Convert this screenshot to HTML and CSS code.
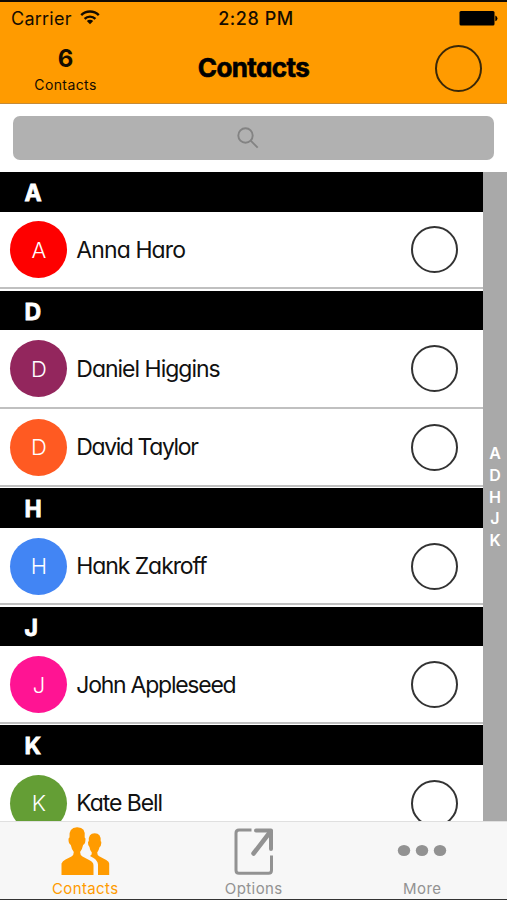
FILE: index.html
```html
<!DOCTYPE html>
<html lang="en">
<head>
<meta charset="utf-8">
<title>Contacts</title>
<link rel="stylesheet" href="styles.css">
</head>
<body>
<div class="app">
  <header class="top">
    <div class="status">
      <div class="carrier"><span>Carrier</span>
        <svg width="20" height="15" viewBox="0 0 20 15" fill="none" stroke="#140c00" stroke-width="2.4"><path d="M1.2 5.2a12.4 12.4 0 0 1 17.6 0M4.6 8.9a7.6 7.6 0 0 1 10.8 0"/><path d="M10 14.2 6.8 11a4.5 4.5 0 0 1 6.400 0z" fill="#140c00" stroke="none"/></svg>
      </div>
      <div class="clock">2:28 PM</div>
      <svg class="battery" width="39" height="15" viewBox="0 0 39 15"><rect x=".5" width="35" height="14.500" rx="1.500"/><path d="M36.300 4.500q2.200 1 2.200 2.900t-2.200 2.900z"/></svg>
    </div>
    <div class="nav">
      <div class="count"><b>6</b><span>Contacts</span></div>
      <h1>Contacts</h1>
      <span class="ring"></span>
    </div>
  </header>
  <div class="search"><div class="field">
    <svg width="22" height="22" viewBox="0 0 22 22" fill="none" stroke="#838383" stroke-width="1.900"><circle cx="8.500" cy="8.500" r="7.200"/><path d="m13.700 13.700 7 7"/></svg>
  </div></div>
  <main class="body">
    <div class="list">
      <h2>A</h2>
      <div class="row last"><span class="avatar red">A</span><span class="name n1">Anna Haro</span><span class="ring"></span></div>
      <h2>D</h2>
      <div class="row"><span class="avatar plum">D</span><span class="name n2">Daniel Higgins</span><span class="ring"></span></div>
      <div class="row last"><span class="avatar orange">D</span><span class="name n3">David Taylor</span><span class="ring"></span></div>
      <h2>H</h2>
      <div class="row last"><span class="avatar blue">H</span><span class="name n4">Hank Zakroff</span><span class="ring"></span></div>
      <h2>J</h2>
      <div class="row last"><span class="avatar pink">J</span><span class="name n5">John Appleseed</span><span class="ring"></span></div>
      <h2>K</h2>
      <div class="row last"><span class="avatar green">K</span><span class="name n6">Kate Bell</span><span class="ring"></span></div>
    </div>
    <nav class="index"><span>A</span><span>D</span><span>H</span><span>J</span><span>K</span></nav>
  </main>
  <footer class="tabs">
    <div class="tab active">
      <svg width="50" height="50" viewBox="0 0 50 50" fill="currentColor"><path d="M1.500 48V36.500q1-2.500 4-4l6-3q2.300-1.200 2.300-4.500-2.300-3-3-7-2.500-1.500-2.300-6 .2-1.500 1-1.600-1-10 7.500-10.200 9-.2 7.700 10.200 1 .3.800 2-.2 4.500-2.400 5.600-.7 4-3 7 0 3.300 2.400 4.500l7 3.800q4 1.800 4 5.200V48z"/><path d="M38 48V37.500q-.4-4-4.500-6.500l-3.500-2q2.300-1.500 1.800-3.500-2-2.500-2.300-5.500-1.600-1-1.500-4.500 0-1.200.8-1.300Q28.200 6.300 34.700 6.300t6 8q.8.200.6 1.700-.2 3.500-1.800 4.300-.7 3.200-2.300 5.200 0 2.700 2 3.800l7 3.600q3 1.500 3 3.600V48z"/></svg>
      <span>Contacts</span>
    </div>
    <div class="tab">
      <svg width="40" height="50" viewBox="0 0 40 50" fill="none" stroke="currentColor" stroke-width="3"><path d="M17.500 3H5Q2 3 2 6v37.300q0 3 3 3h29.500q3 0 3-3V28.500"/><path d="M22 3.500h15V22" stroke-width="4" stroke-linejoin="round" stroke-linecap="round"/><path d="M36.500 4.500 19.500 26.500" stroke-width="4.500" stroke-linecap="round"/></svg>
      <span>Options</span>
    </div>
    <div class="tab">
      <svg width="50" height="50" viewBox="0 0 50 50" fill="currentColor"><ellipse cx="7" cy="23.500" rx="6.200" ry="5.500"/><ellipse cx="25" cy="23.500" rx="6.200" ry="5.500"/><ellipse cx="43" cy="23.500" rx="6.200" ry="5.500"/></svg>
      <span>More</span>
    </div>
  </footer>
</div>
</body>
</html>
```
FILE: styles.css
```css
* { box-sizing: border-box; }
body { margin: 0; font-family: Inter, "Liberation Sans", sans-serif; }
.app { width: 507px; height: 900px; display: flex; flex-direction: column; overflow: hidden; background: #fff; border-bottom: 1px solid #333; }
.top { height: 104px; flex: none; background: #ff9b00; border-top: 2px solid #100a04; border-bottom: 1px solid #c58b38; color: #140c00; }
.status { height: 32px; display: grid; grid-template-columns: 1fr 100px 1fr; align-items: center; padding: 0 9px 0 11px; }
.carrier { display: flex; align-items: center; gap: 8px; font-size: 18px; letter-spacing: .25px; }
.carrier svg { margin-top: -2px; }
.clock { text-align: center; font-size: 18px; font-weight: 500; letter-spacing: .55px; padding-left: 3px; white-space: nowrap; }
.battery { justify-self: end; fill: #000; }
.nav { height: 68px; display: grid; grid-template-columns: 131px 1fr 131px; align-items: center; }
.count { display: flex; flex-direction: column; align-items: center; padding-top: 6px; }
.count b { font-size: 24px; line-height: 28px; font-weight: 700; }
.count span { font-size: 14px; line-height: 24px; letter-spacing: .4px; }
h1, h2, .name { font-feature-settings: "cv11"; }
h1 { margin: 0; text-align: center; font-size: 26px; line-height: 32px; font-weight: 700; letter-spacing: -.6px; color: #000; -webkit-text-stroke: .6px #000; stroke-linejoin: round; }
.ring { width: 47px; height: 47px; flex: none; border: 2px solid #333; border-radius: 50%; }
.nav .ring { justify-self: end; margin-right: 25.500px; border-color: #3a2808; }
.search { height: 68px; flex: none; padding: 12px 13px 0 13px; }
.field { height: 44px; border-radius: 7px; background: #b1b1b1; display: flex; align-items: center; justify-content: center; padding-right: 12px; }
.body { flex: 1; min-height: 0; display: flex; overflow: hidden; }
.list { flex: 1; }
h2 { margin: 0; height: 39.600px; padding-left: 24.500px; background: #000; color: #fff; font-size: 23px; line-height: 42px; font-weight: 700; -webkit-text-stroke: .8px #fff; stroke-linejoin: round; }
.row { height: 79px; display: flex; align-items: center; padding: 0 25px 0 10.400px; border-bottom: 2px solid #c0c0c0; }
.row.last { height: 77.500px; padding-top: 1px; margin-bottom: 1.500px; }
.avatar { width: 57px; height: 57px; border-radius: 50%; color: #fff; font-size: 22px; font-weight: 300; display: flex; align-items: center; justify-content: center; }
.red { background: #fe0000; }
.plum { background: #93265d; }
.orange { background: #ff5a22; }
.blue { background: #4285f4; }
.pink { background: #ff1493; }
.green { background: #649e35; }
.name { flex: 1; margin-left: 8.900px; font-size: 23px; white-space: nowrap; color: #111; }
.n1 { letter-spacing: -.9px; }
.n2 { letter-spacing: -1px; }
.n3 { letter-spacing: -1.400px; }
.n4 { letter-spacing: -1.080px; }
.n5 { letter-spacing: -1.250px; }
.n6 { letter-spacing: -1.080px; }
.index { width: 24px; background: #a9a9a9; color: #fff; display: flex; flex-direction: column; align-items: center; justify-content: center; padding-top: 2px; font-size: 16px; font-weight: 600; line-height: 21.700px; }
.tabs { height: 78px; flex: none; display: grid; grid-template-columns: repeat(3, 168.500px); background: #f7f7f7; border-top: 1px solid #e0e0e0; color: #929292; padding-left: 1px; }
.tab { display: flex; flex-direction: column; align-items: center; padding-top: 5px; }
.tab svg { flex: none; }
.tab span { font-size: 15px; line-height: 24px; letter-spacing: .4px; }
.active { color: #ff9b00; }
```
